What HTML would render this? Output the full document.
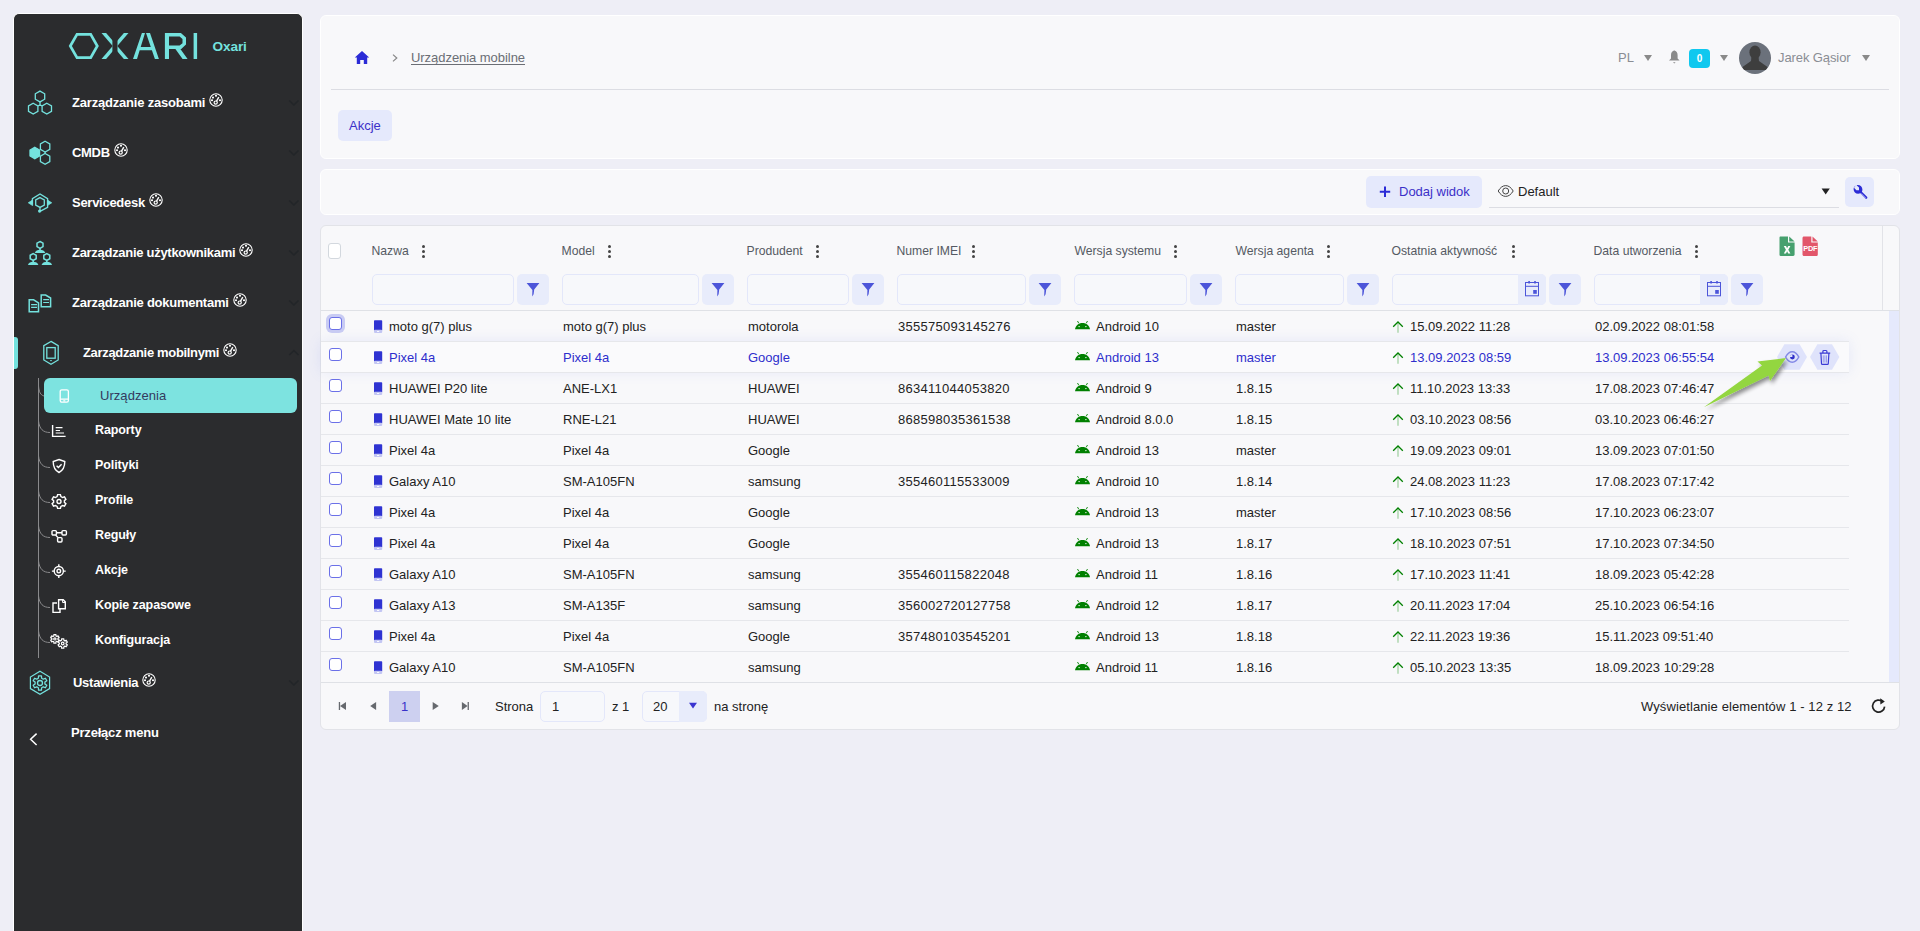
<!DOCTYPE html>
<html><head><meta charset="utf-8"><style>
*{box-sizing:border-box;margin:0;padding:0}
html,body{width:1920px;height:931px;overflow:hidden;background:#eeeef6;font-family:"Liberation Sans",sans-serif;font-size:13px;color:#222}
.a{position:absolute}
.t{position:absolute;white-space:nowrap;line-height:15px;font-size:13px}
svg{position:absolute;overflow:visible}
#side{position:absolute;left:13px;top:13px;width:290px;height:930px;background:#2b2c2e;border:1px solid #fff;border-bottom:none;border-radius:6px 6px 0 0}
.card{position:absolute;background:#f8f8fa;border:1px solid #fff;border-radius:6px}
.mi{position:absolute;color:#fff;font-weight:bold;white-space:nowrap;line-height:15px;font-size:13px;letter-spacing:-0.2px}
.mi svg{position:relative;display:inline-block;vertical-align:top;margin-left:4px;top:-2px}
.si{position:absolute;color:#fff;font-weight:bold;white-space:nowrap;line-height:15px;font-size:12.5px;letter-spacing:-0.1px}

</style></head><body>
<div id="side"></div>
<!-- logo -->
<svg style="left:0;top:0" width="300" height="80" viewBox="0 0 300 80">
<defs><clipPath id="xclip"><path d="M95 20 L112.4 20 L112.4 70 L95 70 Z M117.5 20 L135 20 L135 70 L117.5 70 Z"/></clipPath></defs>
<path d="M70.3 46 L77 34.3 L90.7 34.3 L97.3 46 L90.7 57.7 L77 57.7 Z" fill="none" stroke="#74e2de" stroke-width="2.7"/>
<g fill="#74e2de">
<g clip-path="url(#xclip)"><path d="M101.5 33 L106.1 33 L128.5 59 L123.9 59 Z"/><path d="M123.9 33 L128.5 33 L106.1 59 L101.5 59 Z"/></g>
<path d="M133 59 L141.9 33 L145 33 L137 59 Z M146 33 L150 33 L158.9 59 L154.9 59 Z M139.4 47 L152 47 L153 50.2 L138.4 50.2 Z"/>
<path fill-rule="evenodd" d="M164.9 33 L180.9 33 L186 37.5 L186 44.6 L181.2 49.1 L180.4 49.1 L187.6 59 L182.6 59 L175.4 49.1 L169 49.1 L169 59 L164.9 59 Z M169 36.4 L179.6 36.4 L182.5 39 L182.5 43.2 L179.6 45.6 L169 45.6 Z"/>
<rect x="193.6" y="33" width="3.5" height="26"/>
</g>
<text x="212.5" y="51" fill="#74e2de" font-family="Liberation Sans" font-weight="bold" font-size="13.6" letter-spacing="-0.1">Oxari</text>
</svg>

<!-- main icons -->
<svg style="left:24px;top:88px" width="32" height="30" viewBox="0 0 32 30" fill="none" stroke="#74e2de" stroke-width="1.3">
<path d="M16 3.1 L20.7 5.8 L20.7 11.2 L16 13.9 L11.3 11.2 L11.3 5.8 Z"/>
<path d="M9.2 15.3 L13.9 18 L13.9 23.4 L9.2 26.1 L4.5 23.4 L4.5 18 Z"/>
<path d="M22.8 15.3 L27.5 18 L27.5 23.4 L22.8 26.1 L18.1 23.4 L18.1 18 Z"/>
<path d="M16 13.9 L16 16.8 L13.9 18 M16 16.8 L18.1 18"/>
</svg>
<svg style="left:24px;top:138px" width="32" height="30" viewBox="0 0 32 30" fill="none" stroke="#74e2de" stroke-width="1.3">
<path d="M10.8 9.3 L15.6 12.1 L15.6 17.9 L10.8 20.7 L6 17.9 L6 12.1 Z" fill="#74e2de"/>
<path d="M21.1 3.2 L25.8 5.9 L25.8 11.3 L21.1 14 L16.4 11.3 L16.4 5.9 Z"/>
<path d="M21.1 15.5 L25.8 18.2 L25.8 23.6 L21.1 26.3 L16.4 23.6 L16.4 18.2 Z"/>
<path d="M21.1 14 L21.1 15.5"/>
</svg>
<svg style="left:24px;top:188px" width="32" height="30" viewBox="0 0 32 30" fill="none" stroke="#74e2de" stroke-width="1.3">
<path d="M8.4 16.5 L8.4 10.6 L16 6 L23.6 10.6 L23.6 19.3 L16 23.4"/>
<path d="M16 9.6 L20.3 12 L20.3 17 L16 19.4 L11.7 17 L11.7 12 Z"/>
<path d="M16 19.4 L16 22.6"/>
<path d="M8.6 12 L4.3 14.8 L8.6 17.6 Z M23.4 12 L27.7 14.8 L23.4 17.6 Z" fill="#74e2de" stroke-width="0.8"/>
<circle cx="15.6" cy="23.1" r="1.6" fill="#74e2de" stroke="none"/>
</svg>
<svg style="left:24px;top:238px" width="32" height="30" viewBox="0 0 32 30" fill="none" stroke="#74e2de" stroke-width="1.5">
<path d="M16 3.5 L19 5.2 L19 8.6 L16 10.3 L13 8.6 L13 5.2 Z"/>
<path d="M9.2 15.6 L12.2 17.3 L12.2 20.7 L9.2 22.4 L6.2 20.7 L6.2 17.3 Z"/>
<path d="M22.8 15.6 L25.8 17.3 L25.8 20.7 L22.8 22.4 L19.8 20.7 L19.8 17.3 Z"/>
<path d="M16 10.3 L16 12 M9.2 22.4 L9.2 24 M22.8 22.4 L22.8 24"/>
<g fill="#74e2de" stroke="none">
<path d="M10.8 15 C11.5 12.8 13.5 11.8 16 11.8 C18.5 11.8 20.5 12.8 21.3 15 Z"/>
<path d="M3.9 26.9 C4.6 24.7 6.7 23.7 9.2 23.7 C11.7 23.7 13.7 24.7 14.4 26.9 Z"/>
<path d="M17.6 26.9 C18.3 24.7 20.3 23.7 22.8 23.7 C25.3 23.7 27.4 24.7 28.1 26.9 Z"/>
</g>
</svg>
<svg style="left:24px;top:288px" width="32" height="30" viewBox="0 0 32 30" fill="none" stroke="#74e2de" stroke-width="1.5">
<path d="M5.2 11.8 L9.6 11.8 L14.5 14.8 L14.5 23.8 L5.2 23.8 Z"/>
<path d="M17.2 7 L21.6 7 L26.6 10 L26.6 18.8 L17.2 18.8 Z"/>
<path d="M7.1 16.6 L13 16.6 M7.1 19.4 L13 19.4 M19.2 11.6 L25 11.6 M19.2 14.5 L25 14.5" stroke-width="1.1"/>
</svg>
<div class="a" style="left:14px;top:337px;width:4px;height:32px;background:#74e2de;border-radius:0 3px 3px 0"></div>
<svg style="left:36px;top:338px" width="32" height="30" viewBox="0 0 32 30" fill="none" stroke="#74e2de" stroke-width="1.3">
<path d="M15 3.4 L22.2 7.6 L22.2 22 L15 26.2 L7.8 22 L7.8 7.6 Z"/>
<rect x="10.8" y="9.6" width="8.4" height="10.6"/>
<ellipse cx="15" cy="22.6" rx="1" ry="0.6" fill="#74e2de" stroke="none"/>
</svg>
<svg style="left:24px;top:668px" width="32" height="30" viewBox="0 0 32 30" fill="none" stroke="#74e2de" stroke-width="1.2">
<path d="M16 3.3 L25.6 9 L25.6 20.6 L16 26.3 L6.4 20.6 L6.4 9 Z"/>
<path stroke-linejoin="round" stroke-width="1.3" d="M14.33 10.29 L14.57 7.94 L17.43 7.94 L17.67 10.29 L19.25 11.20 L21.40 10.23 L22.83 12.71 L20.92 14.09 L20.92 15.91 L22.83 17.29 L21.40 19.77 L19.25 18.80 L17.67 19.71 L17.43 22.06 L14.57 22.06 L14.33 19.71 L12.75 18.80 L10.60 19.77 L9.17 17.29 L11.08 15.91 L11.08 14.09 L9.17 12.71 L10.60 10.23 L12.75 11.20 Z"/>
<circle cx="16" cy="15" r="2.5" stroke-width="1.3"/>
</svg>

<!-- main texts -->
<div class="mi" style="left:72px;top:95px">Zarządzanie zasobami<svg width="14" height="14" viewBox="0 0 14 14" fill="none" stroke="#fff" stroke-width="1.1"><circle cx="7" cy="7" r="6.2"/><path d="M7.4 8.4 L9.8 4.2" stroke-width="1.4"/><circle cx="6.7" cy="9.6" r="1.6" fill="#2b2c2e" stroke-width="1.2"/><circle cx="4" cy="4.6" r="0.5" fill="#fff"/><circle cx="3" cy="7.2" r="0.5" fill="#fff"/><circle cx="7" cy="2.8" r="0.5" fill="#fff"/><circle cx="11" cy="7.2" r="0.5" fill="#fff"/></svg></div>
<div class="mi" style="left:72px;top:145px;letter-spacing:-0.3px">CMDB<svg width="14" height="14" viewBox="0 0 14 14" fill="none" stroke="#fff" stroke-width="1.1"><circle cx="7" cy="7" r="6.2"/><path d="M7.4 8.4 L9.8 4.2" stroke-width="1.4"/><circle cx="6.7" cy="9.6" r="1.6" fill="#2b2c2e" stroke-width="1.2"/><circle cx="4" cy="4.6" r="0.5" fill="#fff"/><circle cx="3" cy="7.2" r="0.5" fill="#fff"/><circle cx="7" cy="2.8" r="0.5" fill="#fff"/><circle cx="11" cy="7.2" r="0.5" fill="#fff"/></svg></div>
<div class="mi" style="left:72px;top:195px;letter-spacing:-0.27px">Servicedesk<svg width="14" height="14" viewBox="0 0 14 14" fill="none" stroke="#fff" stroke-width="1.1"><circle cx="7" cy="7" r="6.2"/><path d="M7.4 8.4 L9.8 4.2" stroke-width="1.4"/><circle cx="6.7" cy="9.6" r="1.6" fill="#2b2c2e" stroke-width="1.2"/><circle cx="4" cy="4.6" r="0.5" fill="#fff"/><circle cx="3" cy="7.2" r="0.5" fill="#fff"/><circle cx="7" cy="2.8" r="0.5" fill="#fff"/><circle cx="11" cy="7.2" r="0.5" fill="#fff"/></svg></div>
<div class="mi" style="left:72px;top:245px;letter-spacing:-0.29px">Zarządzanie użytkownikami<svg width="14" height="14" viewBox="0 0 14 14" fill="none" stroke="#fff" stroke-width="1.1"><circle cx="7" cy="7" r="6.2"/><path d="M7.4 8.4 L9.8 4.2" stroke-width="1.4"/><circle cx="6.7" cy="9.6" r="1.6" fill="#2b2c2e" stroke-width="1.2"/><circle cx="4" cy="4.6" r="0.5" fill="#fff"/><circle cx="3" cy="7.2" r="0.5" fill="#fff"/><circle cx="7" cy="2.8" r="0.5" fill="#fff"/><circle cx="11" cy="7.2" r="0.5" fill="#fff"/></svg></div>
<div class="mi" style="left:72px;top:295px;letter-spacing:-0.26px">Zarządzanie dokumentami<svg width="14" height="14" viewBox="0 0 14 14" fill="none" stroke="#fff" stroke-width="1.1"><circle cx="7" cy="7" r="6.2"/><path d="M7.4 8.4 L9.8 4.2" stroke-width="1.4"/><circle cx="6.7" cy="9.6" r="1.6" fill="#2b2c2e" stroke-width="1.2"/><circle cx="4" cy="4.6" r="0.5" fill="#fff"/><circle cx="3" cy="7.2" r="0.5" fill="#fff"/><circle cx="7" cy="2.8" r="0.5" fill="#fff"/><circle cx="11" cy="7.2" r="0.5" fill="#fff"/></svg></div>
<div class="mi" style="left:83px;top:345px;letter-spacing:-0.33px">Zarządzanie mobilnymi<svg width="14" height="14" viewBox="0 0 14 14" fill="none" stroke="#fff" stroke-width="1.1"><circle cx="7" cy="7" r="6.2"/><path d="M7.4 8.4 L9.8 4.2" stroke-width="1.4"/><circle cx="6.7" cy="9.6" r="1.6" fill="#2b2c2e" stroke-width="1.2"/><circle cx="4" cy="4.6" r="0.5" fill="#fff"/><circle cx="3" cy="7.2" r="0.5" fill="#fff"/><circle cx="7" cy="2.8" r="0.5" fill="#fff"/><circle cx="11" cy="7.2" r="0.5" fill="#fff"/></svg></div>
<div class="mi" style="left:73px;top:675px;letter-spacing:-0.27px">Ustawienia<svg width="14" height="14" viewBox="0 0 14 14" fill="none" stroke="#fff" stroke-width="1.1"><circle cx="7" cy="7" r="6.2"/><path d="M7.4 8.4 L9.8 4.2" stroke-width="1.4"/><circle cx="6.7" cy="9.6" r="1.6" fill="#2b2c2e" stroke-width="1.2"/><circle cx="4" cy="4.6" r="0.5" fill="#fff"/><circle cx="3" cy="7.2" r="0.5" fill="#fff"/><circle cx="7" cy="2.8" r="0.5" fill="#fff"/><circle cx="11" cy="7.2" r="0.5" fill="#fff"/></svg></div>
<div class="mi" style="left:71px;top:725px">Przełącz menu</div>
<svg style="left:28px;top:730px" width="12" height="18" viewBox="0 0 12 18" fill="none" stroke="#fff" stroke-width="1.5"><path d="M8.6 3.6 L2.6 9.3 L8.6 15"/></svg>

<!-- chevrons -->
<svg style="left:286px;top:96px" width="16" height="14" viewBox="0 0 16 14" fill="none" stroke="#222528" stroke-width="1.6"><path d="M3.3 4.5 L7.9 9 L12.5 4.5"/></svg>
<svg style="left:286px;top:146px" width="16" height="14" viewBox="0 0 16 14" fill="none" stroke="#222528" stroke-width="1.6"><path d="M3.3 4.5 L7.9 9 L12.5 4.5"/></svg>
<svg style="left:286px;top:196px" width="16" height="14" viewBox="0 0 16 14" fill="none" stroke="#222528" stroke-width="1.6"><path d="M3.3 4.5 L7.9 9 L12.5 4.5"/></svg>
<svg style="left:286px;top:246px" width="16" height="14" viewBox="0 0 16 14" fill="none" stroke="#222528" stroke-width="1.6"><path d="M3.3 4.5 L7.9 9 L12.5 4.5"/></svg>
<svg style="left:286px;top:296px" width="16" height="14" viewBox="0 0 16 14" fill="none" stroke="#222528" stroke-width="1.6"><path d="M3.3 4.5 L7.9 9 L12.5 4.5"/></svg>
<svg style="left:286px;top:346px" width="16" height="14" viewBox="0 0 16 14" fill="none" stroke="#222528" stroke-width="1.6"><path d="M3.3 9 L7.9 4.5 L12.5 9"/></svg>
<svg style="left:286px;top:676px" width="16" height="14" viewBox="0 0 16 14" fill="none" stroke="#222528" stroke-width="1.6"><path d="M3.3 4.5 L7.9 9 L12.5 4.5"/></svg>

<!-- submenu -->
<div class="a" style="left:38px;top:378px;width:1px;height:280px;background:#8a8a8c"></div>
<svg style="left:0;top:370px" width="80" height="290" viewBox="0 370 80 290" fill="none" stroke="#8a8a8c" stroke-width="1">
<path d="M38.5 386 C39 392 40.5 395 44 396"/>
<path d="M38.5 421 C39.5 429 43 432.5 50 432.5"/>
<path d="M38.5 456 C39.5 464 43 467.5 50 467.5"/>
<path d="M38.5 491 C39.5 499 43 502.5 50 502.5"/>
<path d="M38.5 526 C39.5 534 43 537.5 50 537.5"/>
<path d="M38.5 561 C39.5 569 43 572.5 50 572.5"/>
<path d="M38.5 596 C39.5 604 43 607.5 50 607.5"/>
<path d="M38.5 631 C39.5 639 43 642.5 50 642.5"/>
</svg>
<div class="a" style="left:44px;top:378px;width:253px;height:35px;background:#7de3e0;border-radius:6px"></div>
<svg style="left:56px;top:386px" width="16" height="20" viewBox="0 0 16 20" fill="none" stroke="#fff" stroke-width="1.3">
<rect x="4.2" y="3.8" width="8.2" height="12.4" rx="1.6"/><path d="M4.2 13.2 L12.4 13.2 M7.3 14.8 L9.3 14.8"/>
</svg>
<div class="t" style="left:100px;top:388px;color:#343a5e;letter-spacing:0.05px">Urządzenia</div>

<svg style="left:50px;top:422px" width="18" height="18" viewBox="0 0 18 18" fill="none" stroke="#fff" stroke-width="1.4">
<path d="M2.6 3 L2.6 14.4 L15.6 14.4"/><path d="M5.7 5.7 L12.5 5.7 M5.7 8.5 L10 8.5 M5.7 11 L14 11" stroke-width="1.2"/>
</svg>
<svg style="left:50px;top:457px" width="18" height="18" viewBox="0 0 18 18" fill="none" stroke="#fff" stroke-width="1.4">
<path d="M9 2.5 L14.8 4.6 C14.8 10 13 13.6 9 15.5 C5 13.6 3.2 10 3.2 4.6 Z"/><path d="M6.6 8.8 L8.4 10.5 L11.6 7.2"/>
</svg>
<svg style="left:50px;top:492px" width="18" height="18" viewBox="0 0 18 18" fill="none" stroke="#fff" stroke-width="1.4">
<path d="M7.6 2.6 L10.4 2.6 L10.9 4.5 L12.6 5.5 L14.5 4.9 L15.9 7.3 L14.4 8.6 L14.4 10.4 L15.9 11.7 L14.5 14.1 L12.6 13.5 L10.9 14.5 L10.4 16.4 L7.6 16.4 L7.1 14.5 L5.4 13.5 L3.5 14.1 L2.1 11.7 L3.6 10.4 L3.6 8.6 L2.1 7.3 L3.5 4.9 L5.4 5.5 L7.1 4.5 Z"/><circle cx="9" cy="9.5" r="2"/>
</svg>
<svg style="left:50px;top:527px" width="18" height="18" viewBox="0 0 18 18" fill="none" stroke="#fff" stroke-width="1.4">
<rect x="2" y="3.6" width="4.4" height="4.4" rx="1"/><rect x="12" y="3.6" width="4.4" height="4.4" rx="1"/><rect x="7.6" y="10.6" width="4.4" height="4.4" rx="1"/><path d="M6.4 5.8 L12 5.8 M5.6 8 L8 10.6"/>
</svg>
<svg style="left:50px;top:562px" width="18" height="18" viewBox="0 0 18 18" fill="none" stroke="#fff" stroke-width="1.4">
<circle cx="8.8" cy="9.1" r="4.6"/><circle cx="8.8" cy="9.1" r="1.8"/><path d="M8.8 2.2 L8.8 4.5 M8.8 13.7 L8.8 16 M1.9 9.1 L4.2 9.1 M13.4 9.1 L15.7 9.1"/>
</svg>
<svg style="left:50px;top:597px" width="18" height="18" viewBox="0 0 18 18" fill="none" stroke="#fff" stroke-width="1.4">
<path d="M8.6 2.8 L13.2 2.8 L15.3 4.9 L15.3 11.8 L8.6 11.8 Z"/><path d="M7 6 L3 6 L3 15.4 L10 15.4 L10 12"/><path d="M12.6 2.8 L12.6 5.5 L15.3 5.5" stroke-width="1"/>
</svg>
<svg style="left:50px;top:632px" width="20" height="18" viewBox="0 0 20 18" fill="none" stroke="#fff" stroke-width="1.2" stroke-linejoin="round">
<path d="M3.82 3.99 L3.87 2.62 L5.93 2.62 L5.98 3.99 L6.88 4.51 L8.09 3.87 L9.12 5.65 L7.96 6.38 L7.96 7.42 L9.12 8.15 L8.09 9.93 L6.88 9.29 L5.98 9.81 L5.93 11.18 L3.87 11.18 L3.82 9.81 L2.92 9.29 L1.71 9.93 L0.68 8.15 L1.84 7.42 L1.84 6.38 L0.68 5.65 L1.71 3.87 L2.92 4.51 Z"/><circle cx="4.9" cy="6.9" r="1.1"/>
<path d="M11.52 8.31 L11.58 6.83 L13.82 6.83 L13.88 8.31 L14.87 8.88 L16.18 8.20 L17.30 10.14 L16.05 10.93 L16.05 12.07 L17.30 12.86 L16.18 14.80 L14.87 14.12 L13.88 14.69 L13.82 16.17 L11.58 16.17 L11.52 14.69 L10.53 14.12 L9.22 14.80 L8.10 12.86 L9.35 12.07 L9.35 10.93 L8.10 10.14 L9.22 8.20 L10.53 8.88 Z"/><circle cx="12.7" cy="11.5" r="1.3"/>
</svg>
<div class="si" style="left:95px;top:423px">Raporty</div>
<div class="si" style="left:95px;top:458px">Polityki</div>
<div class="si" style="left:95px;top:493px">Profile</div>
<div class="si" style="left:95px;top:528px">Reguły</div>
<div class="si" style="left:95px;top:563px">Akcje</div>
<div class="si" style="left:95px;top:598px">Kopie zapasowe</div>
<div class="si" style="left:95px;top:633px">Konfiguracja</div>
<div class="card" style="left:320px;top:15px;width:1580px;height:144px"></div>
<svg style="left:354px;top:50px" width="16" height="16" viewBox="0 0 16 16"><path d="M8 1 L15.2 7.6 L13.2 7.6 L13.2 14 L9.8 14 L9.8 10 L6.2 10 L6.2 14 L2.8 14 L2.8 7.6 L0.8 7.6 Z" fill="#2b2bd6"/></svg>
<svg style="left:390px;top:52px" width="10" height="12" viewBox="0 0 10 12" fill="none" stroke="#888" stroke-width="1.2"><path d="M3 2.6 L6.8 6 L3 9.4"/></svg>
<div class="t" style="left:411px;top:50px;color:#6b6e75;text-decoration:underline;text-decoration-skip-ink:none;text-underline-offset:1.6px;letter-spacing:-0.05px">Urządzenia mobilne</div>
<div class="a" style="left:331px;top:89px;width:1558px;height:1px;background:#dcdde3"></div>
<div class="a" style="left:338px;top:110px;width:54px;height:31px;background:#e5e9fc;border-radius:5px"></div>
<div class="t" style="left:349px;top:118px;color:#3b30c8">Akcje</div>

<div class="t" style="left:1618px;top:50px;color:#8a8d94">PL</div>
<svg style="left:1640px;top:50px" width="16" height="16" viewBox="0 0 16 16"><path d="M4 5 L12 5 L8 11 Z" fill="#8a8a8a"/></svg>
<svg style="left:1666px;top:49px" width="16" height="16" viewBox="0 0 16 16"><path d="M8.6 1.6 C10.7 2.2 11.6 4 11.6 6.2 L11.6 9.6 L13.6 11.6 L3 11.6 L5 9.6 L5 6.2 C5 4 5.9 2.2 8 1.6 Z" fill="#8a8a8a"/><path d="M7 13.2 L9.6 13.2 L8.3 14.6 Z" fill="#8a8a8a"/></svg>
<div class="a" style="left:1689px;top:49px;width:21px;height:19px;background:#0fc8ef;border-radius:4px;color:#fff;font-weight:bold;font-size:10px;line-height:19px;text-align:center">0</div>
<svg style="left:1716px;top:50px" width="16" height="16" viewBox="0 0 16 16"><path d="M4 5 L12 5 L8 11 Z" fill="#8a8a8a"/></svg>
<svg style="left:1739px;top:42px" width="32" height="32" viewBox="0 0 32 32"><defs><clipPath id="avc"><circle cx="16" cy="16" r="16"/></clipPath></defs><circle cx="16" cy="16" r="16" fill="#6b717b"/><g clip-path="url(#avc)" fill="#3e3e3e"><ellipse cx="16" cy="10.2" rx="5.6" ry="6.8"/><path d="M12.4 15 L19.6 15 L20 19 L28.5 25 L28.5 28 L3.5 28 L3.5 25 L12 19 Z"/></g></svg>
<div class="t" style="left:1778px;top:50px;color:#8a8d94;letter-spacing:-0.1px">Jarek Gąsior</div>
<svg style="left:1858px;top:50px" width="16" height="16" viewBox="0 0 16 16"><path d="M4 5 L12 5 L8 11 Z" fill="#8a8a8a"/></svg>

<div class="card" style="left:320px;top:169px;width:1580px;height:46px"></div>
<div class="a" style="left:1366px;top:176px;width:116px;height:32px;background:#e5e9fc;border-radius:5px"></div>
<svg style="left:1378px;top:185px" width="14" height="14" viewBox="0 0 14 14" fill="none" stroke="#2b2bd6" stroke-width="2"><path d="M7 1.6 L7 12 M1.8 6.8 L12.2 6.8"/></svg>
<div class="t" style="left:1399px;top:184px;color:#3b30c8">Dodaj widok</div>
<svg style="left:1496px;top:183px" width="20" height="16" viewBox="0 0 20 16" fill="none" stroke="#444" stroke-width="1"><path d="M2.2 8 C4.2 4.6 6.8 2.6 9.7 2.6 C12.6 2.6 15.2 4.6 17.2 8 C15.2 11.4 12.6 13.4 9.7 13.4 C6.8 13.4 4.2 11.4 2.2 8 Z"/><circle cx="9.7" cy="8" r="3"/></svg>
<div class="t" style="left:1518px;top:184px;color:#222">Default</div>
<div class="a" style="left:1489px;top:207px;width:350px;height:1px;background:#dcdde3"></div>
<svg style="left:1818px;top:184px" width="16" height="14" viewBox="0 0 16 14"><path d="M3.6 4.6 L11.8 4.6 L7.7 10.4 Z" fill="#222"/></svg>
<div class="a" style="left:1845px;top:177px;width:29px;height:30px;background:#e5e9fc;border-radius:5px"></div>
<svg style="left:1850px;top:182px" width="20" height="20" viewBox="0 0 20 20"><path d="M5.8 3.6 C4.4 4.4 3.6 5.8 3.6 7.2 C3.6 9.8 5.6 11.8 8.2 11.8 C9 11.8 9.7 11.6 10.3 11.3 L15.4 16.4 C15.9 16.9 16.6 16.9 17 16.4 C17.5 16 17.5 15.3 17 14.8 L11.9 9.7 C12.2 9.1 12.4 8.4 12.4 7.6 C12.4 5 10.4 3 7.8 3 C7.4 3 7 3.1 6.6 3.2 L9 5.6 L9 8.2 L6.4 8.2 L4 5.8 Z" fill="#2b2bd6"/><path d="M11 11.4 L15.6 16" stroke="#e5e9fc" stroke-width="0.7"/></svg>
<div class="card" style="left:320px;top:225px;width:1580px;height:505px;border:1px solid #e2e3e8"></div>
<div class="a" style="left:1882px;top:226px;width:1px;height:85px;background:#e2e3e8"></div>
<div class="a" style="left:321px;top:310px;width:1578px;height:1px;background:#dfe1e6"></div>
<div class="a" style="left:328px;top:243px;width:13px;height:16px;border:1px solid #d3d8de;border-radius:3px;background:#fff"></div>
<div class="t" style="left:371.5px;top:244px;color:#555a63;font-size:12.2px">Nazwa</div>
<div class="a" style="left:422.0px;top:245px;width:3px;height:3px;border-radius:50%;background:#444"></div>
<div class="a" style="left:422.0px;top:250px;width:3px;height:3px;border-radius:50%;background:#444"></div>
<div class="a" style="left:422.0px;top:255px;width:3px;height:3px;border-radius:50%;background:#444"></div>
<div class="a" style="left:372px;top:274px;width:142px;height:31px;border:1px solid #e3e7fa;border-radius:5px;background:#f7f8fb"></div>
<div class="a" style="left:517px;top:274px;width:32px;height:31px;background:#e8ecfb;border-radius:5px"></div>
<svg style="left:526px;top:282px" width="14" height="16" viewBox="0 0 14 16"><path d="M0.6 1 L13.4 1 L8.2 7.6 L7.6 12.2 L6.2 14.6 L6.4 8 Z" fill="#4c55d9"/></svg>
<div class="t" style="left:561.5px;top:244px;color:#555a63;font-size:12.2px">Model</div>
<div class="a" style="left:608.0px;top:245px;width:3px;height:3px;border-radius:50%;background:#444"></div>
<div class="a" style="left:608.0px;top:250px;width:3px;height:3px;border-radius:50%;background:#444"></div>
<div class="a" style="left:608.0px;top:255px;width:3px;height:3px;border-radius:50%;background:#444"></div>
<div class="a" style="left:562px;top:274px;width:137px;height:31px;border:1px solid #e3e7fa;border-radius:5px;background:#f7f8fb"></div>
<div class="a" style="left:702px;top:274px;width:32px;height:31px;background:#e8ecfb;border-radius:5px"></div>
<svg style="left:711px;top:282px" width="14" height="16" viewBox="0 0 14 16"><path d="M0.6 1 L13.4 1 L8.2 7.6 L7.6 12.2 L6.2 14.6 L6.4 8 Z" fill="#4c55d9"/></svg>
<div class="t" style="left:746.5px;top:244px;color:#555a63;font-size:12.2px">Produdent</div>
<div class="a" style="left:816.0px;top:245px;width:3px;height:3px;border-radius:50%;background:#444"></div>
<div class="a" style="left:816.0px;top:250px;width:3px;height:3px;border-radius:50%;background:#444"></div>
<div class="a" style="left:816.0px;top:255px;width:3px;height:3px;border-radius:50%;background:#444"></div>
<div class="a" style="left:747px;top:274px;width:102px;height:31px;border:1px solid #e3e7fa;border-radius:5px;background:#f7f8fb"></div>
<div class="a" style="left:852px;top:274px;width:32px;height:31px;background:#e8ecfb;border-radius:5px"></div>
<svg style="left:861px;top:282px" width="14" height="16" viewBox="0 0 14 16"><path d="M0.6 1 L13.4 1 L8.2 7.6 L7.6 12.2 L6.2 14.6 L6.4 8 Z" fill="#4c55d9"/></svg>
<div class="t" style="left:896.5px;top:244px;color:#555a63;font-size:12.2px">Numer IMEI</div>
<div class="a" style="left:971.5px;top:245px;width:3px;height:3px;border-radius:50%;background:#444"></div>
<div class="a" style="left:971.5px;top:250px;width:3px;height:3px;border-radius:50%;background:#444"></div>
<div class="a" style="left:971.5px;top:255px;width:3px;height:3px;border-radius:50%;background:#444"></div>
<div class="a" style="left:897px;top:274px;width:129px;height:31px;border:1px solid #e3e7fa;border-radius:5px;background:#f7f8fb"></div>
<div class="a" style="left:1029px;top:274px;width:32px;height:31px;background:#e8ecfb;border-radius:5px"></div>
<svg style="left:1038px;top:282px" width="14" height="16" viewBox="0 0 14 16"><path d="M0.6 1 L13.4 1 L8.2 7.6 L7.6 12.2 L6.2 14.6 L6.4 8 Z" fill="#4c55d9"/></svg>
<div class="t" style="left:1074.5px;top:244px;color:#555a63;font-size:12.2px">Wersja systemu</div>
<div class="a" style="left:1174.0px;top:245px;width:3px;height:3px;border-radius:50%;background:#444"></div>
<div class="a" style="left:1174.0px;top:250px;width:3px;height:3px;border-radius:50%;background:#444"></div>
<div class="a" style="left:1174.0px;top:255px;width:3px;height:3px;border-radius:50%;background:#444"></div>
<div class="a" style="left:1074px;top:274px;width:113px;height:31px;border:1px solid #e3e7fa;border-radius:5px;background:#f7f8fb"></div>
<div class="a" style="left:1190px;top:274px;width:32px;height:31px;background:#e8ecfb;border-radius:5px"></div>
<svg style="left:1199px;top:282px" width="14" height="16" viewBox="0 0 14 16"><path d="M0.6 1 L13.4 1 L8.2 7.6 L7.6 12.2 L6.2 14.6 L6.4 8 Z" fill="#4c55d9"/></svg>
<div class="t" style="left:1235.5px;top:244px;color:#555a63;font-size:12.2px">Wersja agenta</div>
<div class="a" style="left:1327.0px;top:245px;width:3px;height:3px;border-radius:50%;background:#444"></div>
<div class="a" style="left:1327.0px;top:250px;width:3px;height:3px;border-radius:50%;background:#444"></div>
<div class="a" style="left:1327.0px;top:255px;width:3px;height:3px;border-radius:50%;background:#444"></div>
<div class="a" style="left:1235px;top:274px;width:109px;height:31px;border:1px solid #e3e7fa;border-radius:5px;background:#f7f8fb"></div>
<div class="a" style="left:1347px;top:274px;width:32px;height:31px;background:#e8ecfb;border-radius:5px"></div>
<svg style="left:1356px;top:282px" width="14" height="16" viewBox="0 0 14 16"><path d="M0.6 1 L13.4 1 L8.2 7.6 L7.6 12.2 L6.2 14.6 L6.4 8 Z" fill="#4c55d9"/></svg>
<div class="t" style="left:1391.5px;top:244px;color:#555a63;font-size:12.2px">Ostatnia aktywność</div>
<div class="a" style="left:1512.0px;top:245px;width:3px;height:3px;border-radius:50%;background:#444"></div>
<div class="a" style="left:1512.0px;top:250px;width:3px;height:3px;border-radius:50%;background:#444"></div>
<div class="a" style="left:1512.0px;top:255px;width:3px;height:3px;border-radius:50%;background:#444"></div>
<div class="a" style="left:1392px;top:274px;width:154px;height:31px;border:1px solid #e3e7fa;border-radius:5px;background:#f7f8fb"></div>
<div class="a" style="left:1518px;top:274px;width:28px;height:31px;background:#e8ecfb;border-radius:0 5px 5px 0"></div>
<svg style="left:1524px;top:280px" width="16" height="17" viewBox="0 0 16 17" fill="none" stroke="#4c55d9" stroke-width="1"><rect x="1.5" y="2.5" width="13" height="13.3"/><path d="M1.5 6.3 L14.5 6.3"/><path d="M5.1 1 L5.1 3.4 M11 1 L11 3.4" stroke-width="1.6"/><rect x="9.2" y="10" width="3.6" height="3.8" fill="#4c55d9" stroke="none"/></svg>
<div class="a" style="left:1549px;top:274px;width:32px;height:31px;background:#e8ecfb;border-radius:5px"></div>
<svg style="left:1558px;top:282px" width="14" height="16" viewBox="0 0 14 16"><path d="M0.6 1 L13.4 1 L8.2 7.6 L7.6 12.2 L6.2 14.6 L6.4 8 Z" fill="#4c55d9"/></svg>
<div class="t" style="left:1593.5px;top:244px;color:#555a63;font-size:12.2px">Data utworzenia</div>
<div class="a" style="left:1694.5px;top:245px;width:3px;height:3px;border-radius:50%;background:#444"></div>
<div class="a" style="left:1694.5px;top:250px;width:3px;height:3px;border-radius:50%;background:#444"></div>
<div class="a" style="left:1694.5px;top:255px;width:3px;height:3px;border-radius:50%;background:#444"></div>
<div class="a" style="left:1594px;top:274px;width:134px;height:31px;border:1px solid #e3e7fa;border-radius:5px;background:#f7f8fb"></div>
<div class="a" style="left:1700px;top:274px;width:28px;height:31px;background:#e8ecfb;border-radius:0 5px 5px 0"></div>
<svg style="left:1706px;top:280px" width="16" height="17" viewBox="0 0 16 17" fill="none" stroke="#4c55d9" stroke-width="1"><rect x="1.5" y="2.5" width="13" height="13.3"/><path d="M1.5 6.3 L14.5 6.3"/><path d="M5.1 1 L5.1 3.4 M11 1 L11 3.4" stroke-width="1.6"/><rect x="9.2" y="10" width="3.6" height="3.8" fill="#4c55d9" stroke="none"/></svg>
<div class="a" style="left:1731px;top:274px;width:32px;height:31px;background:#e8ecfb;border-radius:5px"></div>
<svg style="left:1740px;top:282px" width="14" height="16" viewBox="0 0 14 16"><path d="M0.6 1 L13.4 1 L8.2 7.6 L7.6 12.2 L6.2 14.6 L6.4 8 Z" fill="#4c55d9"/></svg>
<svg style="left:1779px;top:236px" width="17" height="21" viewBox="0 0 17 21"><path d="M1.5 0.5 L9 0.5 L9 6.5 L15.6 6.5 L15.6 18.6 C15.6 19.4 15 20 14.2 20 L1.5 20 C0.8 20 0.5 19.4 0.5 18.8 L0.5 1.6 C0.5 1 0.9 0.5 1.5 0.5 Z M10.2 0.6 L15.6 5.4 L10.2 5.4 Z" fill="#46a06e"/><path d="M4.8 10 L7 10 L8.1 12.3 L9.2 10 L11.4 10 L9.3 13.8 L11.4 17.6 L9.2 17.6 L8.1 15.3 L7 17.6 L4.8 17.6 L6.9 13.8 Z" fill="#fff"/></svg>
<svg style="left:1802px;top:236px" width="17" height="21" viewBox="0 0 17 21"><path d="M2 0.5 L9.3 0.5 L9.3 6.5 L15.8 6.5 L15.8 18.4 C15.8 19.4 15.1 20 14.2 20 L2 20 C1.1 20 0.5 19.4 0.5 18.5 L0.5 2 C0.5 1.1 1.1 0.5 2 0.5 Z M10.5 0.6 L15.8 5.4 L10.5 5.4 Z" fill="#e2566a"/><text x="8.3" y="15.3" text-anchor="middle" font-family="Liberation Sans" font-weight="bold" font-size="7.4" fill="#fff" letter-spacing="-0.3">PDF</text></svg>
<div class="a" style="left:1889px;top:311px;width:10px;height:372px;background:#e5e9fc"></div>
<div class="a" style="left:321px;top:341px;width:1528px;height:31px;background:#fafafc;box-shadow:0 0 14px rgba(100,120,235,0.13)"></div>
<div class="a" style="left:321px;top:341px;width:1528px;height:1px;background:#e6e7eb"></div>
<div class="a" style="left:321px;top:372px;width:1528px;height:1px;background:#e6e7eb"></div>
<div class="a" style="left:321px;top:403px;width:1528px;height:1px;background:#e6e7eb"></div>
<div class="a" style="left:321px;top:434px;width:1528px;height:1px;background:#e6e7eb"></div>
<div class="a" style="left:321px;top:465px;width:1528px;height:1px;background:#e6e7eb"></div>
<div class="a" style="left:321px;top:496px;width:1528px;height:1px;background:#e6e7eb"></div>
<div class="a" style="left:321px;top:527px;width:1528px;height:1px;background:#e6e7eb"></div>
<div class="a" style="left:321px;top:558px;width:1528px;height:1px;background:#e6e7eb"></div>
<div class="a" style="left:321px;top:589px;width:1528px;height:1px;background:#e6e7eb"></div>
<div class="a" style="left:321px;top:620px;width:1528px;height:1px;background:#e6e7eb"></div>
<div class="a" style="left:321px;top:651px;width:1528px;height:1px;background:#e6e7eb"></div>
<div class="a" style="left:321px;top:682px;width:1578px;height:1px;background:#dfe1e6"></div>
<div class="a" style="left:329px;top:317px;width:13px;height:13px;border:1px solid #6b70e8;border-radius:3px;background:#fff;box-shadow:0 0 0 3px #c8cbf3"></div>
<svg style="left:373px;top:319.5px" width="10" height="14" viewBox="0 0 10 14"><rect x="1" y="0.3" width="8.2" height="10.4" rx="0.8" fill="#2f33d2"/><rect x="1" y="9.8" width="8.2" height="3.2" rx="1" fill="#c3c6f3"/><rect x="4" y="11.1" width="2.2" height="0.9" fill="#fff"/></svg>
<svg style="left:1074px;top:320px" width="17" height="11" viewBox="0 0 17 11"><path d="M1 9.2 C1.6 5.6 4.5 2.9 8.5 2.9 C12.5 2.9 15.4 5.6 16 9.2 Z" fill="#008000"/><path d="M3.5 1 L4.8 3.3 M13.5 1 L12.2 3.3" stroke="#008000" stroke-width="0.9"/><circle cx="5.1" cy="6.6" r="0.7" fill="#fff"/><circle cx="11.9" cy="6.6" r="0.7" fill="#fff"/></svg>
<svg style="left:1391px;top:319.5px" width="14" height="14" viewBox="0 0 14 14" fill="none"><path d="M7 2.6 L7 12.8" stroke="#9ccf9c" stroke-width="1.2"/><path d="M2.2 6.8 L7 2 L11.8 6.8" stroke="#008000" stroke-width="1.3"/></svg>
<div class="t" style="left:389px;top:319px;color:#222">moto g(7) plus</div>
<div class="t" style="left:563px;top:319px;color:#222">moto g(7) plus</div>
<div class="t" style="left:748px;top:319px;color:#222">motorola</div>
<div class="t" style="left:898px;top:319px;color:#222;letter-spacing:0.28px">355575093145276</div>
<div class="t" style="left:1096px;top:319px;color:#222">Android 10</div>
<div class="t" style="left:1236px;top:319px;color:#222">master</div>
<div class="t" style="left:1410px;top:319px;color:#222">15.09.2022 11:28</div>
<div class="t" style="left:1595px;top:319px;color:#222">02.09.2022 08:01:58</div>
<div class="a" style="left:329px;top:348px;width:13px;height:13px;border:1px solid #6b70e8;border-radius:3px;background:#fff"></div>
<svg style="left:373px;top:350.5px" width="10" height="14" viewBox="0 0 10 14"><rect x="1" y="0.3" width="8.2" height="10.4" rx="0.8" fill="#2f33d2"/><rect x="1" y="9.8" width="8.2" height="3.2" rx="1" fill="#c3c6f3"/><rect x="4" y="11.1" width="2.2" height="0.9" fill="#fff"/></svg>
<svg style="left:1074px;top:351px" width="17" height="11" viewBox="0 0 17 11"><path d="M1 9.2 C1.6 5.6 4.5 2.9 8.5 2.9 C12.5 2.9 15.4 5.6 16 9.2 Z" fill="#008000"/><path d="M3.5 1 L4.8 3.3 M13.5 1 L12.2 3.3" stroke="#008000" stroke-width="0.9"/><circle cx="5.1" cy="6.6" r="0.7" fill="#fff"/><circle cx="11.9" cy="6.6" r="0.7" fill="#fff"/></svg>
<svg style="left:1391px;top:350.5px" width="14" height="14" viewBox="0 0 14 14" fill="none"><path d="M7 2.6 L7 12.8" stroke="#9ccf9c" stroke-width="1.2"/><path d="M2.2 6.8 L7 2 L11.8 6.8" stroke="#008000" stroke-width="1.3"/></svg>
<div class="t" style="left:389px;top:350px;color:#2e2ecc">Pixel 4a</div>
<div class="t" style="left:563px;top:350px;color:#2e2ecc">Pixel 4a</div>
<div class="t" style="left:748px;top:350px;color:#2e2ecc">Google</div>
<div class="t" style="left:1096px;top:350px;color:#2e2ecc">Android 13</div>
<div class="t" style="left:1236px;top:350px;color:#2e2ecc">master</div>
<div class="t" style="left:1410px;top:350px;color:#2e2ecc">13.09.2023 08:59</div>
<div class="t" style="left:1595px;top:350px;color:#2e2ecc">13.09.2023 06:55:54</div>
<div class="a" style="left:329px;top:379px;width:13px;height:13px;border:1px solid #6b70e8;border-radius:3px;background:#fff"></div>
<svg style="left:373px;top:381.5px" width="10" height="14" viewBox="0 0 10 14"><rect x="1" y="0.3" width="8.2" height="10.4" rx="0.8" fill="#2f33d2"/><rect x="1" y="9.8" width="8.2" height="3.2" rx="1" fill="#c3c6f3"/><rect x="4" y="11.1" width="2.2" height="0.9" fill="#fff"/></svg>
<svg style="left:1074px;top:382px" width="17" height="11" viewBox="0 0 17 11"><path d="M1 9.2 C1.6 5.6 4.5 2.9 8.5 2.9 C12.5 2.9 15.4 5.6 16 9.2 Z" fill="#008000"/><path d="M3.5 1 L4.8 3.3 M13.5 1 L12.2 3.3" stroke="#008000" stroke-width="0.9"/><circle cx="5.1" cy="6.6" r="0.7" fill="#fff"/><circle cx="11.9" cy="6.6" r="0.7" fill="#fff"/></svg>
<svg style="left:1391px;top:381.5px" width="14" height="14" viewBox="0 0 14 14" fill="none"><path d="M7 2.6 L7 12.8" stroke="#9ccf9c" stroke-width="1.2"/><path d="M2.2 6.8 L7 2 L11.8 6.8" stroke="#008000" stroke-width="1.3"/></svg>
<div class="t" style="left:389px;top:381px;color:#222">HUAWEI P20 lite</div>
<div class="t" style="left:563px;top:381px;color:#222">ANE-LX1</div>
<div class="t" style="left:748px;top:381px;color:#222">HUAWEI</div>
<div class="t" style="left:898px;top:381px;color:#222;letter-spacing:0.28px">863411044053820</div>
<div class="t" style="left:1096px;top:381px;color:#222">Android 9</div>
<div class="t" style="left:1236px;top:381px;color:#222">1.8.15</div>
<div class="t" style="left:1410px;top:381px;color:#222">11.10.2023 13:33</div>
<div class="t" style="left:1595px;top:381px;color:#222">17.08.2023 07:46:47</div>
<div class="a" style="left:329px;top:410px;width:13px;height:13px;border:1px solid #6b70e8;border-radius:3px;background:#fff"></div>
<svg style="left:373px;top:412.5px" width="10" height="14" viewBox="0 0 10 14"><rect x="1" y="0.3" width="8.2" height="10.4" rx="0.8" fill="#2f33d2"/><rect x="1" y="9.8" width="8.2" height="3.2" rx="1" fill="#c3c6f3"/><rect x="4" y="11.1" width="2.2" height="0.9" fill="#fff"/></svg>
<svg style="left:1074px;top:413px" width="17" height="11" viewBox="0 0 17 11"><path d="M1 9.2 C1.6 5.6 4.5 2.9 8.5 2.9 C12.5 2.9 15.4 5.6 16 9.2 Z" fill="#008000"/><path d="M3.5 1 L4.8 3.3 M13.5 1 L12.2 3.3" stroke="#008000" stroke-width="0.9"/><circle cx="5.1" cy="6.6" r="0.7" fill="#fff"/><circle cx="11.9" cy="6.6" r="0.7" fill="#fff"/></svg>
<svg style="left:1391px;top:412.5px" width="14" height="14" viewBox="0 0 14 14" fill="none"><path d="M7 2.6 L7 12.8" stroke="#9ccf9c" stroke-width="1.2"/><path d="M2.2 6.8 L7 2 L11.8 6.8" stroke="#008000" stroke-width="1.3"/></svg>
<div class="t" style="left:389px;top:412px;color:#222">HUAWEI Mate 10 lite</div>
<div class="t" style="left:563px;top:412px;color:#222">RNE-L21</div>
<div class="t" style="left:748px;top:412px;color:#222">HUAWEI</div>
<div class="t" style="left:898px;top:412px;color:#222;letter-spacing:0.28px">868598035361538</div>
<div class="t" style="left:1096px;top:412px;color:#222">Android 8.0.0</div>
<div class="t" style="left:1236px;top:412px;color:#222">1.8.15</div>
<div class="t" style="left:1410px;top:412px;color:#222">03.10.2023 08:56</div>
<div class="t" style="left:1595px;top:412px;color:#222">03.10.2023 06:46:27</div>
<div class="a" style="left:329px;top:441px;width:13px;height:13px;border:1px solid #6b70e8;border-radius:3px;background:#fff"></div>
<svg style="left:373px;top:443.5px" width="10" height="14" viewBox="0 0 10 14"><rect x="1" y="0.3" width="8.2" height="10.4" rx="0.8" fill="#2f33d2"/><rect x="1" y="9.8" width="8.2" height="3.2" rx="1" fill="#c3c6f3"/><rect x="4" y="11.1" width="2.2" height="0.9" fill="#fff"/></svg>
<svg style="left:1074px;top:444px" width="17" height="11" viewBox="0 0 17 11"><path d="M1 9.2 C1.6 5.6 4.5 2.9 8.5 2.9 C12.5 2.9 15.4 5.6 16 9.2 Z" fill="#008000"/><path d="M3.5 1 L4.8 3.3 M13.5 1 L12.2 3.3" stroke="#008000" stroke-width="0.9"/><circle cx="5.1" cy="6.6" r="0.7" fill="#fff"/><circle cx="11.9" cy="6.6" r="0.7" fill="#fff"/></svg>
<svg style="left:1391px;top:443.5px" width="14" height="14" viewBox="0 0 14 14" fill="none"><path d="M7 2.6 L7 12.8" stroke="#9ccf9c" stroke-width="1.2"/><path d="M2.2 6.8 L7 2 L11.8 6.8" stroke="#008000" stroke-width="1.3"/></svg>
<div class="t" style="left:389px;top:443px;color:#222">Pixel 4a</div>
<div class="t" style="left:563px;top:443px;color:#222">Pixel 4a</div>
<div class="t" style="left:748px;top:443px;color:#222">Google</div>
<div class="t" style="left:1096px;top:443px;color:#222">Android 13</div>
<div class="t" style="left:1236px;top:443px;color:#222">master</div>
<div class="t" style="left:1410px;top:443px;color:#222">19.09.2023 09:01</div>
<div class="t" style="left:1595px;top:443px;color:#222">13.09.2023 07:01:50</div>
<div class="a" style="left:329px;top:472px;width:13px;height:13px;border:1px solid #6b70e8;border-radius:3px;background:#fff"></div>
<svg style="left:373px;top:474.5px" width="10" height="14" viewBox="0 0 10 14"><rect x="1" y="0.3" width="8.2" height="10.4" rx="0.8" fill="#2f33d2"/><rect x="1" y="9.8" width="8.2" height="3.2" rx="1" fill="#c3c6f3"/><rect x="4" y="11.1" width="2.2" height="0.9" fill="#fff"/></svg>
<svg style="left:1074px;top:475px" width="17" height="11" viewBox="0 0 17 11"><path d="M1 9.2 C1.6 5.6 4.5 2.9 8.5 2.9 C12.5 2.9 15.4 5.6 16 9.2 Z" fill="#008000"/><path d="M3.5 1 L4.8 3.3 M13.5 1 L12.2 3.3" stroke="#008000" stroke-width="0.9"/><circle cx="5.1" cy="6.6" r="0.7" fill="#fff"/><circle cx="11.9" cy="6.6" r="0.7" fill="#fff"/></svg>
<svg style="left:1391px;top:474.5px" width="14" height="14" viewBox="0 0 14 14" fill="none"><path d="M7 2.6 L7 12.8" stroke="#9ccf9c" stroke-width="1.2"/><path d="M2.2 6.8 L7 2 L11.8 6.8" stroke="#008000" stroke-width="1.3"/></svg>
<div class="t" style="left:389px;top:474px;color:#222">Galaxy A10</div>
<div class="t" style="left:563px;top:474px;color:#222">SM-A105FN</div>
<div class="t" style="left:748px;top:474px;color:#222">samsung</div>
<div class="t" style="left:898px;top:474px;color:#222;letter-spacing:0.28px">355460115533009</div>
<div class="t" style="left:1096px;top:474px;color:#222">Android 10</div>
<div class="t" style="left:1236px;top:474px;color:#222">1.8.14</div>
<div class="t" style="left:1410px;top:474px;color:#222">24.08.2023 11:23</div>
<div class="t" style="left:1595px;top:474px;color:#222">17.08.2023 07:17:42</div>
<div class="a" style="left:329px;top:503px;width:13px;height:13px;border:1px solid #6b70e8;border-radius:3px;background:#fff"></div>
<svg style="left:373px;top:505.5px" width="10" height="14" viewBox="0 0 10 14"><rect x="1" y="0.3" width="8.2" height="10.4" rx="0.8" fill="#2f33d2"/><rect x="1" y="9.8" width="8.2" height="3.2" rx="1" fill="#c3c6f3"/><rect x="4" y="11.1" width="2.2" height="0.9" fill="#fff"/></svg>
<svg style="left:1074px;top:506px" width="17" height="11" viewBox="0 0 17 11"><path d="M1 9.2 C1.6 5.6 4.5 2.9 8.5 2.9 C12.5 2.9 15.4 5.6 16 9.2 Z" fill="#008000"/><path d="M3.5 1 L4.8 3.3 M13.5 1 L12.2 3.3" stroke="#008000" stroke-width="0.9"/><circle cx="5.1" cy="6.6" r="0.7" fill="#fff"/><circle cx="11.9" cy="6.6" r="0.7" fill="#fff"/></svg>
<svg style="left:1391px;top:505.5px" width="14" height="14" viewBox="0 0 14 14" fill="none"><path d="M7 2.6 L7 12.8" stroke="#9ccf9c" stroke-width="1.2"/><path d="M2.2 6.8 L7 2 L11.8 6.8" stroke="#008000" stroke-width="1.3"/></svg>
<div class="t" style="left:389px;top:505px;color:#222">Pixel 4a</div>
<div class="t" style="left:563px;top:505px;color:#222">Pixel 4a</div>
<div class="t" style="left:748px;top:505px;color:#222">Google</div>
<div class="t" style="left:1096px;top:505px;color:#222">Android 13</div>
<div class="t" style="left:1236px;top:505px;color:#222">master</div>
<div class="t" style="left:1410px;top:505px;color:#222">17.10.2023 08:56</div>
<div class="t" style="left:1595px;top:505px;color:#222">17.10.2023 06:23:07</div>
<div class="a" style="left:329px;top:534px;width:13px;height:13px;border:1px solid #6b70e8;border-radius:3px;background:#fff"></div>
<svg style="left:373px;top:536.5px" width="10" height="14" viewBox="0 0 10 14"><rect x="1" y="0.3" width="8.2" height="10.4" rx="0.8" fill="#2f33d2"/><rect x="1" y="9.8" width="8.2" height="3.2" rx="1" fill="#c3c6f3"/><rect x="4" y="11.1" width="2.2" height="0.9" fill="#fff"/></svg>
<svg style="left:1074px;top:537px" width="17" height="11" viewBox="0 0 17 11"><path d="M1 9.2 C1.6 5.6 4.5 2.9 8.5 2.9 C12.5 2.9 15.4 5.6 16 9.2 Z" fill="#008000"/><path d="M3.5 1 L4.8 3.3 M13.5 1 L12.2 3.3" stroke="#008000" stroke-width="0.9"/><circle cx="5.1" cy="6.6" r="0.7" fill="#fff"/><circle cx="11.9" cy="6.6" r="0.7" fill="#fff"/></svg>
<svg style="left:1391px;top:536.5px" width="14" height="14" viewBox="0 0 14 14" fill="none"><path d="M7 2.6 L7 12.8" stroke="#9ccf9c" stroke-width="1.2"/><path d="M2.2 6.8 L7 2 L11.8 6.8" stroke="#008000" stroke-width="1.3"/></svg>
<div class="t" style="left:389px;top:536px;color:#222">Pixel 4a</div>
<div class="t" style="left:563px;top:536px;color:#222">Pixel 4a</div>
<div class="t" style="left:748px;top:536px;color:#222">Google</div>
<div class="t" style="left:1096px;top:536px;color:#222">Android 13</div>
<div class="t" style="left:1236px;top:536px;color:#222">1.8.17</div>
<div class="t" style="left:1410px;top:536px;color:#222">18.10.2023 07:51</div>
<div class="t" style="left:1595px;top:536px;color:#222">17.10.2023 07:34:50</div>
<div class="a" style="left:329px;top:565px;width:13px;height:13px;border:1px solid #6b70e8;border-radius:3px;background:#fff"></div>
<svg style="left:373px;top:567.5px" width="10" height="14" viewBox="0 0 10 14"><rect x="1" y="0.3" width="8.2" height="10.4" rx="0.8" fill="#2f33d2"/><rect x="1" y="9.8" width="8.2" height="3.2" rx="1" fill="#c3c6f3"/><rect x="4" y="11.1" width="2.2" height="0.9" fill="#fff"/></svg>
<svg style="left:1074px;top:568px" width="17" height="11" viewBox="0 0 17 11"><path d="M1 9.2 C1.6 5.6 4.5 2.9 8.5 2.9 C12.5 2.9 15.4 5.6 16 9.2 Z" fill="#008000"/><path d="M3.5 1 L4.8 3.3 M13.5 1 L12.2 3.3" stroke="#008000" stroke-width="0.9"/><circle cx="5.1" cy="6.6" r="0.7" fill="#fff"/><circle cx="11.9" cy="6.6" r="0.7" fill="#fff"/></svg>
<svg style="left:1391px;top:567.5px" width="14" height="14" viewBox="0 0 14 14" fill="none"><path d="M7 2.6 L7 12.8" stroke="#9ccf9c" stroke-width="1.2"/><path d="M2.2 6.8 L7 2 L11.8 6.8" stroke="#008000" stroke-width="1.3"/></svg>
<div class="t" style="left:389px;top:567px;color:#222">Galaxy A10</div>
<div class="t" style="left:563px;top:567px;color:#222">SM-A105FN</div>
<div class="t" style="left:748px;top:567px;color:#222">samsung</div>
<div class="t" style="left:898px;top:567px;color:#222;letter-spacing:0.28px">355460115822048</div>
<div class="t" style="left:1096px;top:567px;color:#222">Android 11</div>
<div class="t" style="left:1236px;top:567px;color:#222">1.8.16</div>
<div class="t" style="left:1410px;top:567px;color:#222">17.10.2023 11:41</div>
<div class="t" style="left:1595px;top:567px;color:#222">18.09.2023 05:42:28</div>
<div class="a" style="left:329px;top:596px;width:13px;height:13px;border:1px solid #6b70e8;border-radius:3px;background:#fff"></div>
<svg style="left:373px;top:598.5px" width="10" height="14" viewBox="0 0 10 14"><rect x="1" y="0.3" width="8.2" height="10.4" rx="0.8" fill="#2f33d2"/><rect x="1" y="9.8" width="8.2" height="3.2" rx="1" fill="#c3c6f3"/><rect x="4" y="11.1" width="2.2" height="0.9" fill="#fff"/></svg>
<svg style="left:1074px;top:599px" width="17" height="11" viewBox="0 0 17 11"><path d="M1 9.2 C1.6 5.6 4.5 2.9 8.5 2.9 C12.5 2.9 15.4 5.6 16 9.2 Z" fill="#008000"/><path d="M3.5 1 L4.8 3.3 M13.5 1 L12.2 3.3" stroke="#008000" stroke-width="0.9"/><circle cx="5.1" cy="6.6" r="0.7" fill="#fff"/><circle cx="11.9" cy="6.6" r="0.7" fill="#fff"/></svg>
<svg style="left:1391px;top:598.5px" width="14" height="14" viewBox="0 0 14 14" fill="none"><path d="M7 2.6 L7 12.8" stroke="#9ccf9c" stroke-width="1.2"/><path d="M2.2 6.8 L7 2 L11.8 6.8" stroke="#008000" stroke-width="1.3"/></svg>
<div class="t" style="left:389px;top:598px;color:#222">Galaxy A13</div>
<div class="t" style="left:563px;top:598px;color:#222">SM-A135F</div>
<div class="t" style="left:748px;top:598px;color:#222">samsung</div>
<div class="t" style="left:898px;top:598px;color:#222;letter-spacing:0.28px">356002720127758</div>
<div class="t" style="left:1096px;top:598px;color:#222">Android 12</div>
<div class="t" style="left:1236px;top:598px;color:#222">1.8.17</div>
<div class="t" style="left:1410px;top:598px;color:#222">20.11.2023 17:04</div>
<div class="t" style="left:1595px;top:598px;color:#222">25.10.2023 06:54:16</div>
<div class="a" style="left:329px;top:627px;width:13px;height:13px;border:1px solid #6b70e8;border-radius:3px;background:#fff"></div>
<svg style="left:373px;top:629.5px" width="10" height="14" viewBox="0 0 10 14"><rect x="1" y="0.3" width="8.2" height="10.4" rx="0.8" fill="#2f33d2"/><rect x="1" y="9.8" width="8.2" height="3.2" rx="1" fill="#c3c6f3"/><rect x="4" y="11.1" width="2.2" height="0.9" fill="#fff"/></svg>
<svg style="left:1074px;top:630px" width="17" height="11" viewBox="0 0 17 11"><path d="M1 9.2 C1.6 5.6 4.5 2.9 8.5 2.9 C12.5 2.9 15.4 5.6 16 9.2 Z" fill="#008000"/><path d="M3.5 1 L4.8 3.3 M13.5 1 L12.2 3.3" stroke="#008000" stroke-width="0.9"/><circle cx="5.1" cy="6.6" r="0.7" fill="#fff"/><circle cx="11.9" cy="6.6" r="0.7" fill="#fff"/></svg>
<svg style="left:1391px;top:629.5px" width="14" height="14" viewBox="0 0 14 14" fill="none"><path d="M7 2.6 L7 12.8" stroke="#9ccf9c" stroke-width="1.2"/><path d="M2.2 6.8 L7 2 L11.8 6.8" stroke="#008000" stroke-width="1.3"/></svg>
<div class="t" style="left:389px;top:629px;color:#222">Pixel 4a</div>
<div class="t" style="left:563px;top:629px;color:#222">Pixel 4a</div>
<div class="t" style="left:748px;top:629px;color:#222">Google</div>
<div class="t" style="left:898px;top:629px;color:#222;letter-spacing:0.28px">357480103545201</div>
<div class="t" style="left:1096px;top:629px;color:#222">Android 13</div>
<div class="t" style="left:1236px;top:629px;color:#222">1.8.18</div>
<div class="t" style="left:1410px;top:629px;color:#222">22.11.2023 19:36</div>
<div class="t" style="left:1595px;top:629px;color:#222">15.11.2023 09:51:40</div>
<div class="a" style="left:329px;top:658px;width:13px;height:13px;border:1px solid #6b70e8;border-radius:3px;background:#fff"></div>
<svg style="left:373px;top:660.5px" width="10" height="14" viewBox="0 0 10 14"><rect x="1" y="0.3" width="8.2" height="10.4" rx="0.8" fill="#2f33d2"/><rect x="1" y="9.8" width="8.2" height="3.2" rx="1" fill="#c3c6f3"/><rect x="4" y="11.1" width="2.2" height="0.9" fill="#fff"/></svg>
<svg style="left:1074px;top:661px" width="17" height="11" viewBox="0 0 17 11"><path d="M1 9.2 C1.6 5.6 4.5 2.9 8.5 2.9 C12.5 2.9 15.4 5.6 16 9.2 Z" fill="#008000"/><path d="M3.5 1 L4.8 3.3 M13.5 1 L12.2 3.3" stroke="#008000" stroke-width="0.9"/><circle cx="5.1" cy="6.6" r="0.7" fill="#fff"/><circle cx="11.9" cy="6.6" r="0.7" fill="#fff"/></svg>
<svg style="left:1391px;top:660.5px" width="14" height="14" viewBox="0 0 14 14" fill="none"><path d="M7 2.6 L7 12.8" stroke="#9ccf9c" stroke-width="1.2"/><path d="M2.2 6.8 L7 2 L11.8 6.8" stroke="#008000" stroke-width="1.3"/></svg>
<div class="t" style="left:389px;top:660px;color:#222">Galaxy A10</div>
<div class="t" style="left:563px;top:660px;color:#222">SM-A105FN</div>
<div class="t" style="left:748px;top:660px;color:#222">samsung</div>
<div class="t" style="left:1096px;top:660px;color:#222">Android 11</div>
<div class="t" style="left:1236px;top:660px;color:#222">1.8.16</div>
<div class="t" style="left:1410px;top:660px;color:#222">05.10.2023 13:35</div>
<div class="t" style="left:1595px;top:660px;color:#222">18.09.2023 10:29:28</div>
<svg style="left:1776px;top:343px" width="66" height="28" viewBox="0 0 66 28"><path d="M1 14 L8.4 1.2 L23.6 1.2 L31 14 L23.6 26.8 L8.4 26.8 Z" fill="#dfe3fb"/><path d="M34 14 L41.4 1.2 L56 1.2 L63.4 14 L56 26.8 L41.4 26.8 Z" fill="#dfe3fb"/><path d="M9.6 14 C11.4 10.6 13.6 8.8 16.2 8.8 C18.8 8.8 21 10.6 22.8 14 C21 17.4 18.8 19.2 16.2 19.2 C13.6 19.2 11.4 17.4 9.6 14 Z" fill="none" stroke="#8389e6" stroke-width="1.5"/><circle cx="16.4" cy="14" r="2.4" fill="#3030c8"/><path d="M16.4 14 L16.4 11.4 A2.6 2.6 0 0 0 13.8 14 Z" fill="#dfe3fb"/><path d="M43.6 10.2 L54.2 10.2 M44.9 10.2 L45.5 20.4 C45.5 21 45.9 21.4 46.5 21.4 L51.3 21.4 C51.9 21.4 52.3 21 52.3 20.4 L52.9 10.2 M46.9 10 L46.9 8.4 C46.9 7.9 47.3 7.5 47.8 7.5 L50 7.5 C50.5 7.5 50.9 7.9 50.9 8.4 L50.9 10" fill="none" stroke="#3b3bd5" stroke-width="1.2"/><path d="M47.3 12.4 L47.3 19.6 M48.9 12.4 L48.9 19.6 M50.5 12.4 L50.5 19.6" fill="none" stroke="#8a8fe6" stroke-width="0.8"/></svg>
<svg style="left:1690px;top:340px" width="110" height="80" viewBox="1690 340 110 80"><defs><filter id="sh" x="-20%" y="-20%" width="150%" height="150%"><feGaussianBlur in="SourceAlpha" stdDeviation="2.2"/><feOffset dx="2" dy="3"/><feComponentTransfer><feFuncA type="linear" slope="0.45"/></feComponentTransfer><feMerge><feMergeNode/><feMergeNode in="SourceGraphic"/></feMerge></filter></defs><path d="M1786 358 L1757.5 361.6 L1762 365.6 L1703.8 407.2 L1768.6 375.4 L1770 381 Z" fill="#93d63f" filter="url(#sh)"/></svg>
<svg style="left:336px;top:700px" width="140" height="14" viewBox="0 0 140 14" fill="#66696e"><rect x="2.8" y="2" width="1.3" height="8"/><path d="M4 6 L10 2 L10 10 Z"/><path d="M34.2 6 L40.1 2 L40.1 10 Z"/><path d="M96.7 2 L102.75 6 L96.7 10 Z"/><path d="M125.9 2 L131.6 6 L125.9 10 Z"/><rect x="131.6" y="2" width="1.3" height="8"/></svg>
<div class="a" style="left:389px;top:691px;width:31px;height:31px;background:#cdd0f0"></div>
<div class="t" style="left:401px;top:699px;color:#3730c9">1</div>
<div class="t" style="left:495px;top:699px;color:#222">Strona</div>
<div class="a" style="left:540px;top:691px;width:65px;height:31px;border:1px solid #e3e7fa;border-radius:5px;background:#f7f8fb"></div>
<div class="t" style="left:552px;top:699px;color:#222">1</div>
<div class="t" style="left:612px;top:699px;color:#222">z 1</div>
<div class="a" style="left:642px;top:691px;width:65px;height:31px;border:1px solid #e3e7fa;border-radius:5px;background:#f7f8fb"></div>
<div class="a" style="left:679px;top:691px;width:28px;height:31px;background:#e8ecfb;border-radius:0 5px 5px 0"></div>
<svg style="left:686px;top:700px" width="14" height="12" viewBox="0 0 14 12"><path d="M3 2.8 L11 2.8 L7 8.6 Z" fill="#3b35d0"/></svg>
<div class="t" style="left:653px;top:699px;color:#222">20</div>
<div class="t" style="left:714px;top:699px;color:#222">na stronę</div>
<div class="t" style="left:1641px;top:699px;color:#222;letter-spacing:0.1px">Wyświetlanie elementów 1 - 12 z 12</div>
<svg style="left:1870px;top:697px" width="18" height="18" viewBox="0 0 18 18" fill="none"><path d="M12.6 4.6 A6 6 0 1 0 14.6 9.6" stroke="#222" stroke-width="1.7"/><path d="M10.2 1.2 L14.8 4.6 L10.4 7.6 Z" fill="#222"/></svg>
</body></html>
